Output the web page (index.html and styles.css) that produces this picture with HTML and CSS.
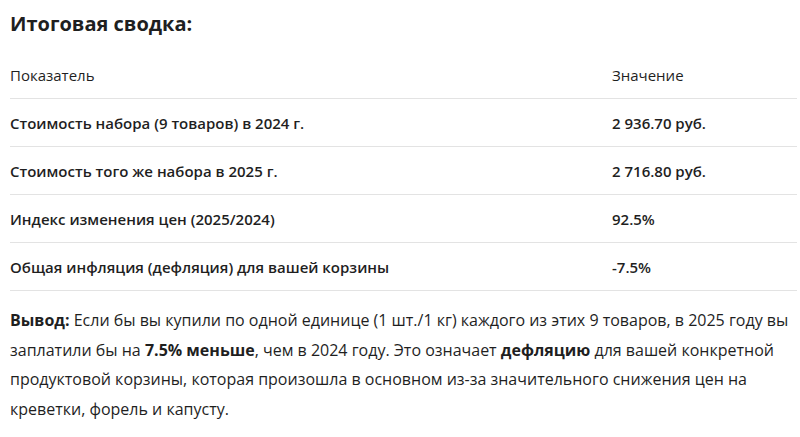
FILE: index.html
```html
<!DOCTYPE html>
<html lang="ru">
<head>
<meta charset="utf-8">
<link rel="stylesheet" href="styles.css">
</head>
<body>
<main class="summary">
  <h2 class="title">Итоговая сводка:</h2>
  <table class="table">
    <thead>
      <tr><th class="col-name">Показатель</th><th class="col-value">Значение</th></tr>
    </thead>
    <tbody>
      <tr><td>Стоимость набора (9 товаров) в 2024 г.</td><td>2 936.70 руб.</td></tr>
      <tr><td>Стоимость того же набора в 2025 г.</td><td>2 716.80 руб.</td></tr>
      <tr><td>Индекс изменения цен (2025/2024)</td><td>92.5%</td></tr>
      <tr><td>Общая инфляция (дефляция) для вашей корзины</td><td>-7.5%</td></tr>
    </tbody>
  </table>
  <p class="conclusion"><strong>Вывод:</strong> Если бы вы купили по одной единице (1 шт./1 кг) каждого из этих 9 товаров, в 2025 году вы заплатили бы на <strong>7.5% меньше</strong>, чем в 2024 году. Это означает <strong>дефляцию</strong> для вашей конкретной продуктовой корзины, которая произошла в основном из-за значительного снижения цен на креветки, форель и капусту.</p>
</main>
</body>
</html>
```

FILE: styles.css
```css
html, body {
  margin: 0;
  padding: 0;
  background: #ffffff;
}
body {
  font-family: "Open Sans", "Noto Sans", sans-serif;
  color: #1f1f1f;
}
.summary {
  padding: 10px 3px 0 10px;
}
.title {
  margin: 0;
  font-size: 20px;
  font-weight: 700;
  line-height: 28px;
}
.table {
  width: 100%;
  border-collapse: collapse;
  margin-top: 13px;
}
.table th,
.table td {
  text-align: left;
  padding: 0;
  height: 47px;
  border-bottom: 1px solid #e3e3e3;
  font-size: 15px;
  vertical-align: middle;
}
.table th {
  font-weight: 400;
}
.table td {
  font-weight: 600;
}
.col-name {
  width: 602px;
}
.conclusion {
  margin: 15px 0 0;
  padding-right: 4px;
  font-size: 16px;
  line-height: 29.5px;
  font-weight: 400;
}
.conclusion strong {
  font-weight: 700;
}
```
